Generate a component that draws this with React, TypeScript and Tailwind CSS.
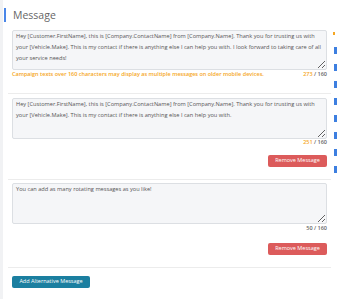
import React from 'react';

const messages = [
  {
    text: 'Hey [Customer.FirstName], this is [Company.ContactName] from [Company.Name]. Thank you for trusting us with your [Vehicle.Make]. This is my contact if there is anything else I can help you with. I look forward to taking care of all your service needs!',
    count: 273,
  },
  {
    text: 'Hey [Customer.FirstName], this is [Company.ContactName] from [Company.Name]. Thank you for trusting us with your [Vehicle.Make]. This is my contact if there is anything else I can help you with.',
    count: 251,
  },
  {
    text: 'You can add as many rotating messages as you like!',
    count: 50,
  },
];

function Counter({ count }: { count: number }) {
  return (
    <span className="shrink-0 text-[5.5px] font-semibold text-[#666] leading-none">
      <span className={count > 160 ? 'text-[#f5a623]' : ''}>{count}</span> / 160
    </span>
  );
}

function MessageBox({ text, h }: { text: string; h: string }) {
  return (
    <textarea
      readOnly
      defaultValue={text}
      className={`block w-full ${h} rounded-[2px] border border-[#dcdfe3] bg-[#f5f6f8] pl-[3px] pr-0 py-0 text-[5.65px] leading-[11px] text-[#555] outline-none`}
    />
  );
}

function RemoveButton() {
  return (
    <div className="flex justify-end">
      <button className="h-[12px] w-[59px] rounded-[2px] bg-[#dc5b5b] text-[5.5px] text-white leading-none">
        Remove Message
      </button>
    </div>
  );
}

export default function App() {
  return (
    <div className="flex w-[337px] h-[299px] bg-white font-['Open_Sans',sans-serif] overflow-hidden">
      <div className="w-[3px] shrink-0 bg-[#f1f2f4]" />

      <div className="flex-1 min-w-0 flex flex-col">
        {/* header */}
        <div className="mt-[8px] flex items-center h-[14px]">
          <div className="ml-[1px] w-[2px] h-[14px] bg-[#4a86e8]" />
          <span className="ml-[7px] text-[10.5px] leading-none text-[#666]">Message</span>
        </div>

        {/* first message */}
        <div className="pl-[9px] pr-[4px] mt-[8px]">
          <MessageBox text={messages[0].text} h="h-[40px]" />
          <div className="flex justify-between items-center h-[10px]">
            <span className="whitespace-nowrap text-[5.5px] font-semibold text-[#f5a623] leading-none">
              Campaign texts over 160 characters may display as multiple messages on older mobile devices.
            </span>
            <Counter count={messages[0].count} />
          </div>
        </div>

        <div className="mt-[13px] ml-[5px] h-px bg-[#ececec]" />

        {/* second message */}
        <div className="pl-[9px] pr-[4px] mt-[4px]">
          <MessageBox text={messages[1].text} h="h-[41px]" />
          <div className="flex justify-end items-center h-[8px]">
            <Counter count={messages[1].count} />
          </div>
          <div className="mt-[8px]">
            <RemoveButton />
          </div>
        </div>

        <div className="mt-[12px] ml-[5px] h-px bg-[#ececec]" />

        {/* third message */}
        <div className="pl-[9px] pr-[4px] mt-[3px]">
          <MessageBox text={messages[2].text} h="h-[41px]" />
          <div className="flex justify-end items-center h-[10px]">
            <Counter count={messages[2].count} />
          </div>
          <div className="mt-[9px]">
            <RemoveButton />
          </div>
        </div>

        <div className="mt-[12px] ml-[5px] h-px bg-[#ececec]" />

        <div className="pl-[9px] mt-[8px] flex">
          <button className="h-[12px] w-[78px] rounded-[2px] bg-[#1b7fa0] text-[5.5px] text-white leading-none">
            Add Alternative Message
          </button>
        </div>
      </div>

      {/* edge of the next column */}
      <div className="w-[6px] shrink-0 flex flex-col items-end">
        <div className="mt-[32px] mr-[2px] w-[2px] h-[3px] bg-[#f5a623]" />
        <div className="mt-[12px] flex flex-col gap-[10px]">
          {[0, 1, 2, 3, 4, 5, 6, 7].map(i => (
            <div key={i} className="w-[3px] h-[7px] bg-[#3d7fe0]" />
          ))}
        </div>
      </div>
    </div>
  );
}
